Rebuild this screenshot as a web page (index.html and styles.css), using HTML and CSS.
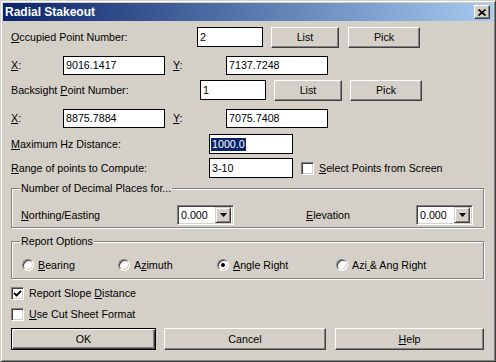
FILE: index.html
```html
<!DOCTYPE html>
<html lang="en">
<head>
<meta charset="UTF-8">
<title>Radial Stakeout</title>
<link rel="stylesheet" href="styles.css">
</head>
<body>

<div class="window">
  <div class="titlebar">
    <span class="title">Radial Stakeout</span>
    <button class="close" title="Close">
      <svg width="8" height="7" viewBox="0 0 8 7"><path d="M0.5 0.5 L7.5 6.5 M7.5 0.5 L0.5 6.5" stroke="#000" stroke-width="1.6" fill="none"/></svg>
    </button>
  </div>

  <div class="content">
    <div class="row r1">
      <span class="label l-occ"><u>O</u>ccupied Point Number:</span>
      <div class="field f-pt">2</div>
      <button class="btn b-list">List</button>
      <button class="btn b-pick">Pick</button>
    </div>

    <div class="row r2">
      <span class="label l-x"><u>X</u>:</span>
      <div class="field f-coord">9016.1417</div>
      <span class="label l-y"><u>Y</u>:</span>
      <div class="field f-coord">7137.7248</div>
    </div>

    <div class="row r3">
      <span class="label l-bs">Backsight <u>P</u>oint Number:</span>
      <div class="field f-pt">1</div>
      <button class="btn b-list">List</button>
      <button class="btn b-pick">Pick</button>
    </div>

    <div class="row r4">
      <span class="label l-x"><u>X</u>:</span>
      <div class="field f-coord">8875.7884</div>
      <span class="label l-y"><u>Y</u>:</span>
      <div class="field f-coord">7075.7408</div>
    </div>

    <div class="row r5">
      <span class="label l-long"><u>M</u>aximum Hz Distance:</span>
      <div class="field f-mid"><span class="sel">1000.0</span></div>
    </div>

    <div class="row r6">
      <span class="label l-long"><u>R</u>ange of points to Compute:</span>
      <div class="field f-mid">3-10</div>
      <span class="check cb-screen"></span>
      <span class="check-text"><u>S</u>elect Points from Screen</span>
    </div>

    <fieldset class="group g-dec">
      <legend>Number of Decimal Places for...</legend>
      <div class="row dec-row">
        <span class="label l-ne"><u>N</u>orthing/Easting</span>
        <div class="combo"><span class="combo-val">0.000</span><span class="combo-btn"><svg width="7" height="4" viewBox="0 0 7 4"><path d="M0 0 H7 L3.5 4 Z" fill="#000"/></svg></span></div>
        <span class="label l-elev"><u>E</u>levation</span>
        <div class="combo"><span class="combo-val">0.000</span><span class="combo-btn"><svg width="7" height="4" viewBox="0 0 7 4"><path d="M0 0 H7 L3.5 4 Z" fill="#000"/></svg></span></div>
      </div>
    </fieldset>

    <fieldset class="group g-rep">
      <legend>Report Options</legend>
      <div class="row radio-row">
        <span class="opt o1"><span class="radio"></span><u>B</u>earing</span>
        <span class="opt o2"><span class="radio"></span>A<u>z</u>imuth</span>
        <span class="opt o3"><span class="radio on"></span><u>A</u>ngle Right</span>
        <span class="opt o4"><span class="radio"></span>Azi<u>&nbsp;</u>&amp; Ang Right</span>
      </div>
    </fieldset>

    <div class="row cbrow cb1">
      <span class="check">
        <svg width="9" height="9" viewBox="0 0 9 9"><path d="M1 4 L3.5 6.5 L8 2" stroke="#000" stroke-width="1.8" fill="none"/></svg>
      </span>
      <span class="check-text">Report Slope <u>D</u>istance</span>
    </div>
    <div class="row cbrow cb2">
      <span class="check"></span>
      <span class="check-text"><u>U</u>se Cut Sheet Format</span>
    </div>

    <div class="row btn-row">
      <button class="btn default b-ok">OK</button>
      <button class="btn b-cancel">Cancel</button>
      <button class="btn b-help"><u>H</u>elp</button>
    </div>
  </div>
</div>

</body>
</html>
```

FILE: styles.css
```css
*, *::before, *::after { box-sizing: border-box; margin: 0; padding: 0; }
body {
  background: #d4d0c8;
  font-family: "Liberation Sans", Arial, sans-serif;
  font-size: 10.7px;
  line-height: 13px;
  color: #000;
}
u { text-decoration: underline; text-underline-offset: 1px; }

.window {
  width: 496px;
  height: 362px;
  background: #d4d0c8;
  border: 1px solid;
  border-color: #d4d0c8 #404040 #404040 #d4d0c8;
  box-shadow: inset 1px 1px #fff, inset -1px -1px #808080;
  padding: 2px;
}

.titlebar {
  height: 18px;
  background: linear-gradient(90deg, #0a246a, #a6caf0);
  display: flex;
  align-items: center;
  justify-content: space-between;
  padding: 0 3px 0 2px;
}
.title { color: #fff; font-weight: bold; font-size: 12px; }
.close {
  width: 16px; height: 14px;
  background: #d4d0c8;
  border: 1px solid;
  border-color: #fff #404040 #404040 #fff;
  box-shadow: inset -1px -1px #808080;
  display: flex; align-items: center; justify-content: center;
}
.close svg { display: block; margin-left: -1px; }

.content { padding-left: 8px; }

.row { display: flex; align-items: center; }
.label { white-space: nowrap; flex-shrink: 0; }

.field {
  background: #fff;
  border: 1px solid #000;
  height: 20px;
  padding: 1px 2px 0;
  display: flex;
  align-items: center;
  flex-shrink: 0;
}
.sel { background: #0a246a; color: #fff; padding: 0 1px; margin-left: -1px; }

.btn {
  font: inherit;
  color: #000;
  background: #d4d0c8;
  border: 1px solid;
  border-color: #fff #404040 #404040 #fff;
  box-shadow: inset -1px -1px #808080;
  height: 21px;
  flex-shrink: 0;
}
.btn.default {
  border: 1px solid #000;
  box-shadow: inset 1px 1px #fff, inset -1px -1px #404040, inset -2px -2px #808080;
}

/* rows */
.r1 { margin-top: 5px; height: 22px; }
.r2 { margin-top: 7px; height: 20px; }
.r3 { margin-top: 4px; height: 22px; }
.r4 { margin-top: 7px; height: 20px; }
.r5 { margin-top: 6px; height: 20px; }
.r6 { margin-top: 4px; height: 20px; }

.l-occ { width: 186px; }
.l-bs { width: 189px; }
.l-x { width: 52px; }
.l-y { width: 53px; margin-left: 8px; }
.l-long { width: 198px; }

.f-pt { width: 66px; }
.f-coord { width: 102px; height: 19px; }
.f-mid { width: 84px; }
.b-list { width: 68px; margin-left: 8px; }
.b-pick { width: 72px; margin-left: 9px; }
.r3 .b-pick { margin-left: 8px; }

.check {
  width: 13px; height: 13px;
  background: #fff;
  border: 1px solid;
  border-color: #808080 #fff #fff #808080;
  box-shadow: inset 1px 1px #404040, inset -1px -1px #d4d0c8;
  display: flex; align-items: center; justify-content: center;
  flex-shrink: 0;
}
.check svg { display: block; }
.check-text { margin-left: 5px; white-space: nowrap; }
.cb-screen { margin-left: 8px; }

/* group boxes */
.group {
  width: 473px;
  border: 1px solid #808080;
  box-shadow: inset 1px 1px #fff, 1px 1px #fff;
  padding: 0 0 2px 8px;
  min-width: 0;
}
.group legend { padding: 0 1px; background: #d4d0c8; line-height: 13px; }
.g-dec { margin-top: 4px; }
.dec-row { height: 20px; margin-top: 10px; padding-left: 1px; }
.l-ne { width: 156px; }
.l-elev { width: 110px; margin-left: 72px; }

.combo {
  width: 57px; height: 20px;
  background: #fff;
  border: 1px solid;
  border-color: #808080 #fff #fff #808080;
  box-shadow: inset 1px 1px #404040, inset -1px -1px #d4d0c8;
  display: flex;
  align-items: center;
  justify-content: space-between;
  padding: 2px;
  flex-shrink: 0;
}
.combo-val { padding-left: 1px; padding-top: 1px; }
.combo-btn {
  width: 16px; height: 16px;
  background: #d4d0c8;
  border: 1px solid;
  border-color: #d4d0c8 #404040 #404040 #d4d0c8;
  box-shadow: inset 1px 1px #fff, inset -1px -1px #808080;
  display: flex; align-items: center; justify-content: center;
}
.combo-btn svg { display: block; }

.g-rep { margin-top: 7px; padding-bottom: 5px; }
.radio-row { height: 16px; margin-top: 9px; padding-left: 2px; }
.opt { display: flex; align-items: center; white-space: nowrap; }
.o1 { width: 96px; }
.o2 { width: 99px; }
.o3 { width: 119px; }
.radio {
  width: 12px; height: 12px;
  border-radius: 50%;
  background: #fff;
  border: 1px solid;
  border-color: #808080 #fff #fff #808080;
  box-shadow: inset 1px 1px #404040, inset -1px -1px #d4d0c8;
  margin-right: 4px;
  display: flex; align-items: center; justify-content: center;
  flex-shrink: 0;
}
.radio.on::after {
  content: '';
  width: 4px; height: 4px;
  border-radius: 50%;
  background: #000;
}

.cbrow { height: 13px; }
.cb1 { margin-top: 8px; }
.cb2 { margin-top: 8px; }

.btn-row { margin-top: 7px; }
.btn-row .btn { height: 22px; }
.b-ok { width: 145px; }
.b-cancel { width: 162px; margin-left: 8px; }
.b-help { width: 149px; margin-left: 9px; }
```
